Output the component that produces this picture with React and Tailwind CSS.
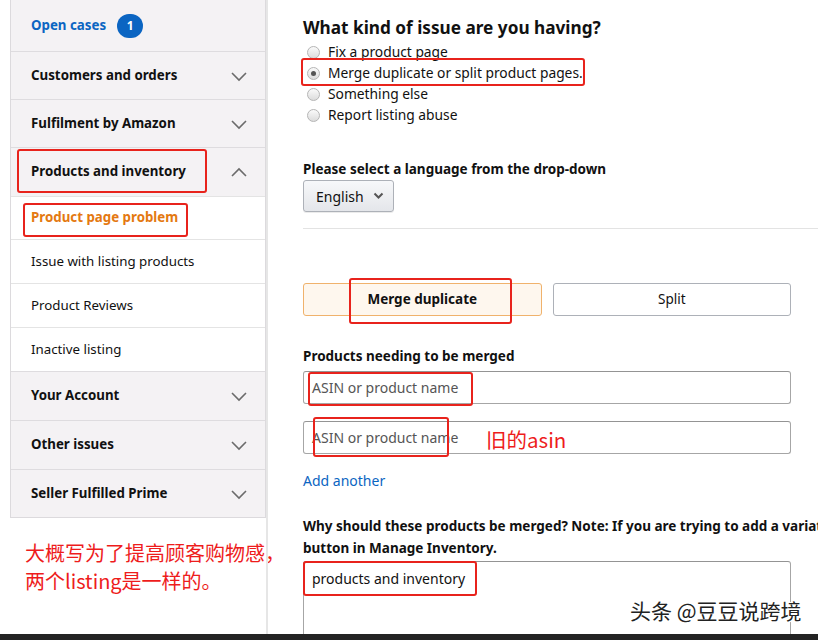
import React from "react";

const font = { fontFamily: '"Noto Sans", "Open Sans", Arial, sans-serif' };
const cjk = { fontFamily: '"Noto Sans CJK SC", "Noto Sans", sans-serif' };

function Chevron({ up = false }) {
  return (
    <svg width="18" height="12" viewBox="0 0 18 12" className="text-[#6b6b6b]">
      <polyline
        points={up ? "2,10 9,3 16,10" : "2,3 9,10 16,3"}
        fill="none"
        stroke="currentColor"
        strokeWidth="1.6"
      />
    </svg>
  );
}

function NavHeader({ label, up, h }) {
  return (
    <div
      className={`flex items-center justify-between pl-[20px] pr-[17px] bg-[#f4f2f4] border-t border-[#dedcdf] ${h}`}
    >
      <span className="text-[13.3px] font-bold text-[#111]">{label}</span>
      <Chevron up={up} />
    </div>
  );
}

function NavSub({ label, active, h = "h-[44px]" }) {
  return (
    <div className={`flex items-center pl-[20px] bg-white border-t border-[#e4e4e4] ${h}`}>
      <span
        className={`text-[13.3px] ${
          active ? "font-bold text-[#e47911]" : "text-[#111]"
        }`}
      >
        {label}
      </span>
    </div>
  );
}

function Radio({ label, checked }) {
  return (
    <div className="flex items-center h-[21px] gap-[8px] pl-[4px]">
      <span className="w-[13px] h-[13px] rounded-full border border-[#b5b5b5] bg-gradient-to-b from-[#fafafa] to-[#dcdcdc] flex items-center justify-center">
        {checked && <span className="w-[5px] h-[5px] rounded-full bg-[#555]" />}
      </span>
      <span className="text-[13.8px] text-[#111]">{label}</span>
    </div>
  );
}

function Box({ className }) {
  return (
    <div
      className={`absolute border-2 border-[#e8231c] rounded-[3px] pointer-events-none ${className}`}
    />
  );
}

export default function App() {
  return (
    <div
      className="relative w-[818px] h-[640px] overflow-hidden bg-white flex flex-col"
      style={font}
    >
      <div className="flex flex-1 min-h-0">
        {/* left column */}
        <div className="w-[266px] shrink-0 pl-[10px]">
          <div className="w-[256px] border-x border-b border-[#dcdadd]">
            <div className="flex items-center h-[51px] pl-[20px] gap-[11px] bg-[#f4f2f4]">
              <span className="text-[13.3px] font-bold text-[#0b65c2]">
                Open cases
              </span>
              <span className="w-[26px] h-[24px] rounded-full bg-[#0b65c2] text-white text-[12px] font-bold flex items-center justify-center">
                1
              </span>
            </div>
            <NavHeader label="Customers and orders" h="h-[48px]" />
            <NavHeader label="Fulfilment by Amazon" h="h-[48px]" />
            <NavHeader label="Products and inventory" up h="h-[49px]" />
            <NavSub label="Product page problem" active h="h-[43px]" />
            <NavSub label="Issue with listing products" />
            <NavSub label="Product Reviews" />
            <NavSub label="Inactive listing" />
            <NavHeader label="Your Account" h="h-[49px]" />
            <NavHeader label="Other issues" h="h-[49px]" />
            <NavHeader label="Seller Fulfilled Prime" h="h-[48px]" />
          </div>
          <div
            className="mt-[21px] ml-[15px] text-[20px] leading-[28px] text-[#ee1c1c] whitespace-nowrap"
            style={cjk}
          >
            <div>大概写为了提高顾客购物感，</div>
            <div>两个listing是一样的。</div>
          </div>
        </div>

        {/* main column */}
        <div className="flex-1 border-l-2 border-[#e6e6e6] pl-[35px] pt-[16px]">
          <h2 className="text-[17.2px] leading-[24px] font-bold text-[#111] whitespace-nowrap">
            What kind of issue are you having?
          </h2>
          <div className="mt-[2px]">
            <Radio label="Fix a product page" />
            <Radio label="Merge duplicate or split product pages." checked />
            <Radio label="Something else" />
            <Radio label="Report listing abuse" />
          </div>

          <div className="mt-[33px] text-[13.5px] leading-[20px] font-bold text-[#111]">
            Please select a language from the drop-down
          </div>
          <div className="mt-[1px] w-[91px] h-[32px] rounded-[3px] border border-[#adb1b8] bg-gradient-to-b from-[#f7f8fa] to-[#e4e6ea] flex items-center pl-[12px] gap-[9px] shadow-[0_1px_0_rgba(0,0,0,0.08)]">
            <span className="text-[14px] text-[#111]">English</span>
            <svg width="11" height="8" viewBox="0 0 11 8">
              <polyline
                points="1.5,1.5 5.5,5.5 9.5,1.5"
                fill="none"
                stroke="#555"
                strokeWidth="2"
              />
            </svg>
          </div>

          <div className="mt-[16px] border-t border-[#e3e3e3]" />

          <div className="mt-[54px] w-[488px] flex gap-[11px]">
            <div className="flex-1 h-[33px] rounded-[3px] border border-[#f0b26c] bg-[#fef7ee] flex items-center justify-center text-[13.5px] font-bold text-[#111]">
              Merge duplicate
            </div>
            <div className="flex-1 h-[33px] rounded-[3px] border border-[#adb1b8] bg-white flex items-center justify-center text-[13.5px] text-[#111]">
              Split
            </div>
          </div>

          <div className="mt-[30px] text-[13.5px] leading-[20px] font-bold text-[#111]">
            Products needing to be merged
          </div>
          <div className="mt-[5px] w-[488px] h-[33px] rounded-[3px] border border-[#a6a6a6] border-t-[#949494] flex items-center pl-[8px] text-[14px] text-[#555]">
            ASIN or product name
          </div>
          <div className="mt-[17px] w-[488px] h-[33px] rounded-[3px] border border-[#a6a6a6] border-t-[#949494] flex items-center pl-[8px] text-[14px] text-[#555]">
            ASIN or product name
          </div>
          <div className="mt-[17px] text-[14px] leading-[20px] text-[#0b65c2]">
            Add another
          </div>

          <div className="mt-[24px] text-[13.5px] leading-[22px] font-bold text-[#111] whitespace-nowrap">
            <div>
              Why should these products be merged? Note: If you are trying to add a variation to an existing family, please use the Edit
            </div>
            <div>button in Manage Inventory.</div>
          </div>
          <div className="mt-[2px] w-[488px] h-[120px] rounded-[3px] border border-[#a6a6a6] border-t-[#949494] pl-[8px] pt-[6px] text-[14px] text-[#111]">
            products and inventory
          </div>
        </div>
      </div>
      <div className="h-[6px] bg-[#232323] shrink-0" />

      {/* annotations */}
      <Box className="left-[17px] top-[149px] w-[190px] h-[44px]" />
      <Box className="left-[23px] top-[203px] w-[165px] h-[34px]" />
      <Box className="left-[301px] top-[58px] w-[284px] h-[28px]" />
      <Box className="left-[349px] top-[278px] w-[163px] h-[46px]" />
      <Box className="left-[308px] top-[372px] w-[165px] h-[34px]" />
      <Box className="left-[313px] top-[417px] w-[136px] h-[40px]" />
      <Box className="left-[303px] top-[561px] w-[174px] h-[35px]" />

      <div
        className="absolute left-[486px] top-[426px] text-[20.5px] leading-[27px] text-[#ee1c1c]"
        style={cjk}
      >
        旧的asin
      </div>
      <div
        className="absolute left-[630px] top-[596px] text-[21px] leading-[28px] text-[#222] [text-shadow:1px_1px_0_#fff,-1px_-1px_0_#fff]"
        style={cjk}
      >
        头条 @豆豆说跨境
      </div>
    </div>
  );
}
